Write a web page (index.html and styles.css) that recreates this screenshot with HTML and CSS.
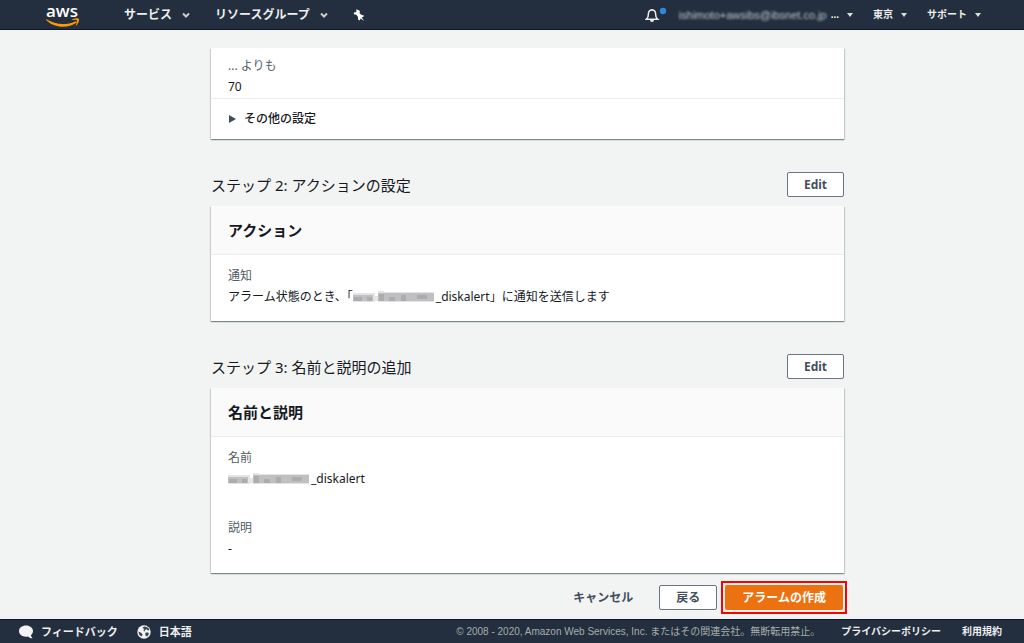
FILE: index.html
```html
<!DOCTYPE html>
<html lang="ja">
<head>
<meta charset="utf-8">
<title>アラームの作成</title>
<link rel="stylesheet" href="styles.css">
</head>
<body>
<header class="topbar">
  <a class="logo" href="#" aria-label="aws">
    <span class="logo-text">aws</span>
    <svg class="logo-smile" viewBox="0 0 35 10" aria-hidden="true"><path d="M0.5 1.2C10 7.2 21 7.4 30 3.4c1.200-.5 2 .6 1 1.400C23 11 8 10.500.2 2 0 1.500.2 1 .5 1.200z"/><path d="M27 1.200c2-1.400 6-1.500 6.800-.7.700 1-.4 5.200-2.500 7-.4.300-.8.100-.6-.400.700-1.700 1.500-4.400 1.100-5-.5-.6-3-.4-4.500-.2-.5 0-.7-.4-.3-.7z"/></svg>
  </a>
  <nav class="nav-main">
    <button class="nav-button" type="button">サービス<svg class="chevron" viewBox="0 0 8 6" aria-hidden="true"><path d="M1 1.500l3 3 3-3"/></svg></button>
    <button class="nav-button" type="button">リソースグループ<svg class="chevron" viewBox="0 0 8 6" aria-hidden="true"><path d="M1 1.500l3 3 3-3"/></svg></button>
    <button class="nav-button" type="button" aria-label="ピン"><svg class="pin" viewBox="0 0 12 14" aria-hidden="true"><path d="M3.200 1.200L6.800 2.800 6.600 5.300 8.600 7 11 7.400 10.400 8.800 8.700 9.400 11.200 13 7.700 10.400 6.600 12.600 5 11.600 5 9 3.400 6.800.8 6.300 1 4.600 3.400 4z"/></svg></button>
  </nav>
  <nav class="nav-user">
    <button class="bell-button" type="button" aria-label="通知"><svg class="bell" viewBox="0 0 22 16" aria-hidden="true"><path class="bell-line" d="M1.500 12.200c1.900-1.500 1.900-3 1.900-5.200C3.400 4.500 4.800 3 7 3s3.600 1.500 3.600 4c0 2.200 0 3.700 1.900 5.200z"/><path class="bell-fill" d="M6 3a1 1 0 0 1 2 0zM5 13h4a2 2 0 0 1-4 0z"/><circle class="bell-dot" cx="18" cy="4" r="3.200"/></svg></button>
    <button class="user-button" type="button"><span class="account-name">ishimoto+awsibs@ibsnet.co.jp</span><span>...</span><svg class="caret" viewBox="0 0 6 4" aria-hidden="true"><path d="M0 0h6L3 4z"/></svg></button>
    <button class="user-button" type="button">東京<svg class="caret" viewBox="0 0 6 4" aria-hidden="true"><path d="M0 0h6L3 4z"/></svg></button>
    <button class="user-button" type="button">サポート<svg class="caret" viewBox="0 0 6 4" aria-hidden="true"><path d="M0 0h6L3 4z"/></svg></button>
  </nav>
</header>

<main class="content">
  <section class="card">
    <dl class="fields compact">
      <dt>... よりも</dt>
      <dd>70</dd>
    </dl>
    <button class="expander" type="button"><svg class="triangle" viewBox="0 0 7 8" aria-hidden="true"><path d="M0 0l7 4-7 4z"/></svg>その他の設定</button>
  </section>

  <div class="step">
    <h2>ステップ 2: アクションの設定</h2>
    <button class="button edit" type="button">Edit</button>
  </div>
  <section class="card">
    <h3>アクション</h3>
    <dl class="fields">
      <dt>通知</dt>
      <dd>アラーム状態のとき、「<svg class="redacted" viewBox="0 0 83 12" aria-hidden="true"><path class="r1" d="M0 2h22v9H0zM22 5h4v5h-4zM25 0h6v2h-6zM36 1h45v10H25V1z"/><path class="r2" d="M0 4h20v6H0zM25 2h56v8H25z"/><path class="r3" d="M1 6h8v4H1zM14 6h5v4h-5zM26 3h5v7h-5zM36 6h6v4h-6zM48 4h5v6h-5zM64 4h10v4H64z"/></svg>_diskalert」に通知を送信します</dd>
    </dl>
  </section>

  <div class="step">
    <h2>ステップ 3: 名前と説明の追加</h2>
    <button class="button edit" type="button">Edit</button>
  </div>
  <section class="card">
    <h3>名前と説明</h3>
    <dl class="fields">
      <dt>名前</dt>
      <dd><svg class="redacted" viewBox="0 0 83 12" aria-hidden="true"><path class="r1" d="M0 2h22v9H0zM22 5h4v5h-4zM25 0h6v2h-6zM36 1h45v10H25V1z"/><path class="r2" d="M0 4h20v6H0zM25 2h56v8H25z"/><path class="r3" d="M1 6h8v4H1zM14 6h5v4h-5zM26 3h5v7h-5zM36 6h6v4h-6zM48 4h5v6h-5zM64 4h10v4H64z"/></svg>_diskalert</dd>
      <dt class="spaced">説明</dt>
      <dd>-</dd>
    </dl>
  </section>

  <div class="actions">
    <button class="button link" type="button">キャンセル</button>
    <button class="button back" type="button">戻る</button>
    <span class="highlight"><button class="button primary" type="button">アラームの作成</button></span>
  </div>
</main>

<footer class="footer">
  <a class="footer-link" href="#"><svg class="footer-icon" viewBox="0 0 14 14" aria-hidden="true"><path d="M7 .5c4 0 7 2.400 7 5.600 0 1.700-.8 3-2 4 .1 1.300.6 2.200 1.500 3.200-1.800.2-3.300-.6-4.300-1.800C4 12.400 0 10.200 0 6.100 0 2.900 3 .5 7 .5z"/></svg>フィードバック</a>
  <a class="footer-link" href="#"><svg class="footer-icon" viewBox="0 0 14 14" aria-hidden="true"><circle cx="7" cy="7" r="6.700"/><path class="land" d="M5.500 2.200L8 1.400l3.300 1.400L12.400 5l-1.600.4-1-1.200-1.600.6-.6 1.600L6.400 5.800 7 4.200zM8.600 7.400l2.600.2.8 1.400-1.800 2.600-1.400-.6-.6-2zM1.400 6.600l2.800 1.200 1.400 1.600-.8 2.200L2.400 10z"/></svg>日本語</a>
  <span class="copyright">© 2008 - 2020, Amazon Web Services, Inc. またはその関連会社。無断転用禁止。</span>
  <a class="legal" href="#">プライバシーポリシー</a>
  <a class="legal" href="#">利用規約</a>
</footer>
</body>
</html>
```
FILE: styles.css
```css
* { box-sizing: border-box; }

body {
  margin: 0;
  min-height: 100vh;
  display: flex;
  flex-direction: column;
  background: #f2f3f3;
  color: #16191f;
  font: 12px/20px "Noto Sans", "Noto Sans CJK JP", sans-serif;
}

button { margin: 0; padding: 0; border: 0; background: none; color: inherit; font: inherit; cursor: pointer; }
a { color: inherit; text-decoration: none; }
h2, h3, dl, dd { margin: 0; }
svg { flex: none; }

.topbar {
  height: 30px;
  padding: 0 43px 0 46px;
  display: flex;
  align-items: center;
  background: #232f3e;
  border-bottom: 1px solid #0f1726;
  color: #eee;
  font-family: "Liberation Sans", "Noto Sans CJK JP", sans-serif;
}
.logo { display: flex; flex-direction: column; min-width: 34px; color: #fff; }
.logo-text { font: 600 17px/18px "Open Sans", sans-serif; }
.logo-smile { width: 34px; height: 10px; margin-top: -2px; fill: #f90; }
.nav-main { display: flex; align-items: center; gap: 25px; margin-left: 44px; padding-top: 1px; }
.nav-button { display: flex; align-items: center; gap: 10px; font-weight: 700; }
.chevron { width: 8px; height: 6px; fill: none; stroke: #ccc; stroke-width: 2; }
.pin { width: 12px; height: 14px; fill: #fff; }
.nav-user { display: flex; align-items: center; gap: 20px; margin-left: auto; padding-top: 1px; font-size: 10px; }
.user-button { display: flex; align-items: center; gap: 8px; font-weight: 700; }
.bell-button { display: flex; margin-right: -8px; }
.bell { width: 22px; height: 16px; }
.bell-line { fill: none; stroke: #eee; stroke-width: 1.5; }
.bell-fill { fill: #eee; }
.bell-dot { fill: #2e86de; }
.account-name { margin-right: -4px; filter: blur(1px); color: #c0c6cc; font-size: 11px; font-weight: 400; }
.caret { width: 6px; height: 4px; fill: #ddd; }

.content { flex: 1; padding: 18px 180px 4px 211px; }
.card {
  background: #fff;
  box-shadow: 0 1px 1px #001c2450, 1px 1px 1px #001c2426, -1px 1px 1px #001c2420;
}
.card h3 {
  padding: 12px 17px;
  background: #fafafa;
  border-bottom: 1px solid #eaeded;
  font-size: 15px;
  line-height: 24px;
}
.fields { padding: 10px 17px 14px; line-height: 21px; }
.fields dt { color: #545b64; }
.fields .spaced { margin-top: 28px; }
.compact { padding: 7px 17px 1px; border-bottom: 1px solid #eaeded; }
.expander { display: flex; align-items: center; gap: 8px; width: 100%; padding: 10px 18px; font-weight: 500; }
.triangle { width: 7px; height: 8px; fill: #414d5c; }
.redacted { width: 83px; height: 12px; vertical-align: -2px; }
.r1 { fill: #e4e4e5; }
.r2 { fill: #c0c0c2; }
.r3 { fill: #acacae; }

.step { display: flex; align-items: center; justify-content: space-between; padding: 33px 0 9px; }
.step h2 { font-size: 15px; font-weight: 400; line-height: 24px; }
.button { height: 25px; border-radius: 2px; color: #444f5d; font-weight: 700; }
.edit, .back { background: #fff; border: 1px solid #6b7480; }
.edit { width: 57px; }
.actions { display: flex; align-items: center; justify-content: flex-end; padding-top: 8px; margin-right: -3px; }
.link { padding: 0 26px; }
.back { width: 58px; margin-right: 4px; }
.highlight { display: flex; padding: 2px; border: 2px solid #f00; }
.primary { padding: 0 17px; background: #ec7211; color: #fff; }

.footer {
  display: flex;
  align-items: center;
  height: 24px;
  padding: 0 22px 0 19px;
  background: #232f3e;
  border-top: 1px solid #0c1633;
  color: #eee;
  font: 700 11px/20px "Liberation Sans", "Noto Sans CJK JP", sans-serif;
}
.footer-link { display: flex; align-items: center; gap: 8px; margin-right: 19px; }
.footer-icon { width: 14px; height: 14px; fill: #f4f4f4; }
.land { fill: #3a4655; }
.copyright { margin-left: auto; font-size: 10px; font-weight: 400; color: #a5adad; }
.legal { margin-left: 21px; font-size: 10px; }
```
